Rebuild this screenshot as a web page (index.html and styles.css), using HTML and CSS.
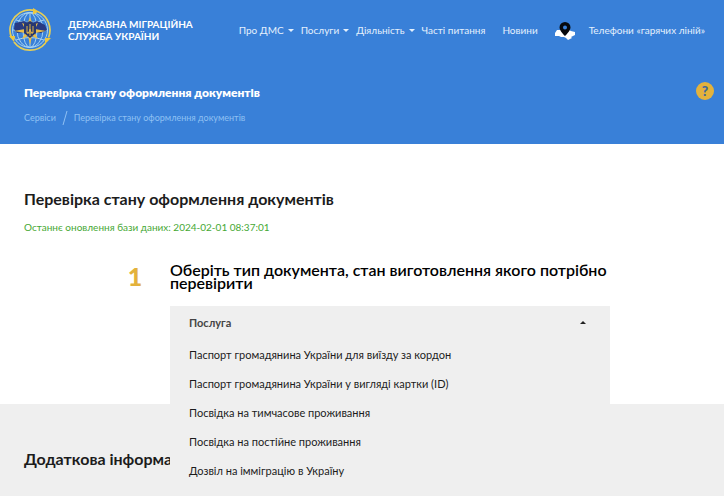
FILE: index.html
```html
<!DOCTYPE html>
<html lang="uk">
<head>
<meta charset="utf-8">
<meta name="viewport" content="width=device-width, initial-scale=1">
<title>Перевірка стану оформлення документів</title>
<link rel="stylesheet" href="styles.css">
</head>
<body>
<header class="header">
  <div class="topbar">
    <a class="brand" href="#">
      <svg class="emblem" viewBox="0 0 44 44" aria-hidden="true">
        <g fill="none" stroke="#a5d2f2" stroke-width="1">
          <circle cx="22" cy="22" r="17.5"/>
          <ellipse cx="22" cy="22" rx="7" ry="17.5"/>
          <ellipse cx="22" cy="22" rx="13" ry="17.5"/>
          <path d="M22 4v36M5 22h34M8 12q14 5 28 0M8 32q14-5 28 0"/>
        </g>
        <g fill="none" stroke="#e3cd58" stroke-width="1.8">
          <path d="M27 2.600A20 20 0 0 0 3.500 29.500M6 34a20 20 0 0 0 31.500 1M40.500 29.500A20 20 0 0 0 30 3.700"/>
        </g>
        <path fill="#ecc73f" d="M25 0l6 3.500-6 3zM1 28l6 0-1 6zM43 30l-6 0 0 6z"/>
        <path fill="#283b82" d="M7 15l9-2 6 3 7-3 8 4 2 5-6 3-6-1-5 4-5-4-8 1-3-4z"/>
        <path fill="#e8bd48" d="M22 9l3 8 5-2-3 6 11 2-11 2 3 6-6-3-2 9-2-9-6 3 3-6-11-2 11-2-3-6 5 2z"/>
        <path fill="#27376f" d="M16 16l6-3 6 3v9l-6 5-6-5z"/>
        <path fill="none" stroke="#e0b548" stroke-width="1" d="M19 18v7h6v-7M22 16v12M19 25q3 0 3-4q0 4 3 4"/>
      </svg>
      <span class="brand-name">ДЕРЖАВНА МІГРАЦІЙНА<br>СЛУЖБА УКРАЇНИ</span>
    </a>
    <nav class="nav">
      <a class="has-menu" href="#">Про ДМС</a>
      <a class="has-menu" href="#">Послуги</a>
      <a class="has-menu" href="#">Діяльність</a>
      <a class="nav-wide" href="#">Часті питання</a>
      <a class="nav-wide" href="#">Новини</a>
      <a class="nav-map" href="#" aria-label="Карта підрозділів">
        <svg class="map-icon" viewBox="0 0 20 20" aria-hidden="true">
          <path fill="#fff" d="M0 13l2-3 4 0 4 1 4-1 2 1 4 1v3l-4 2 1 1-4 2-2-2-2-1-3 0-2-1-4 0z"/>
          <path fill="#07090c" fill-rule="evenodd" d="M10 2a5.500 5.500 0 0 0-5.500 5.500C4.500 11 10 16 10 16s5.500-5 5.500-8.500A5.500 5.500 0 0 0 10 2zm0 3.500a2 2 0 1 1 0 4 2 2 0 0 1 0-4z"/>
        </svg>
      </a>
      <a href="#">Телефони «гарячих ліній»</a>
    </nav>
  </div>
  <div class="page-head">
    <div>
      <p class="page-name">Перевірка стану оформлення документів</p>
      <nav class="crumbs" aria-label="Навігація">
        <a href="#">Сервіси</a>
        <svg class="slash" viewBox="0 0 6 16" aria-hidden="true"><path d="M1 15L5 1" stroke="#8fc0f3" fill="none"/></svg>
        <span>Перевірка стану оформлення документів</span>
      </nav>
    </div>
    <button class="help" type="button" aria-label="Довідка">?</button>
  </div>
</header>
<main class="main">
  <section class="check">
    <h1>Перевірка стану оформлення документів</h1>
    <p class="updated">Останнє оновлення бази даних: 2024-02-01 08:37:01</p>
    <div class="step">
      <span class="step-number">1</span>
      <div class="step-body">
        <h2 id="step-title">Оберіть тип документа, стан виготовлення якого потрібно перевірити</h2>
        <div class="dropdown">
          <button class="toggle" type="button" aria-haspopup="listbox" aria-expanded="true" aria-controls="services">Послуга</button>
          <ul class="options" id="services" role="listbox" aria-labelledby="step-title">
            <li role="option">Паспорт громадянина України для виїзду за кордон</li>
            <li role="option">Паспорт громадянина України у вигляді картки (ID)</li>
            <li role="option">Посвідка на тимчасове проживання</li>
            <li role="option">Посвідка на постійне проживання</li>
            <li role="option">Дозвіл на імміграцію в Україну</li>
          </ul>
        </div>
      </div>
    </div>
  </section>
  <section class="extra">
    <h2>Додаткова інформація</h2>
  </section>
</main>
</body>
</html>
```
FILE: styles.css
```css
* { box-sizing: border-box; }
body {
  margin: 0;
  min-height: 100vh;
  display: flex;
  flex-direction: column;
  background: #fff;
  color: #1c1c1c;
  font-family: Lato, "Open Sans", sans-serif;
  font-size: 11px;
}
h1, h2, p, ul { margin: 0; padding: 0; }
a { color: inherit; text-decoration: none; }
button { font: inherit; color: inherit; border: 0; cursor: pointer; }

.header { background: #3980d8; color: #fff; padding-bottom: 18px; }
.topbar {
  display: flex;
  justify-content: space-between;
  align-items: center;
  height: 60px;
  padding: 0 19px 0 8px;
}
.brand { display: flex; align-items: center; gap: 16px; }
.emblem { width: 44px; height: 44px; }
.brand-name { font-weight: 700; font-size: 10px; line-height: 12px; white-space: nowrap; }
.nav {
  display: flex;
  align-items: center;
  gap: 7px;
  font-size: 10px;
  line-height: 16px;
  white-space: nowrap;
  color: #e4f0fd;
}
.has-menu { display: flex; align-items: center; gap: 4px; }
.has-menu::after {
  content: "";
  border: 3px solid transparent;
  border-top-color: #e4f0fd;
  border-bottom: 0;
}
.nav-wide { margin-right: 10px; }
.map-icon { display: block; width: 20px; height: 20px; }
.nav-map { margin-right: 7px; }

.page-head {
  display: flex;
  justify-content: space-between;
  align-items: flex-start;
  padding: 22px 10px 0 24px;
}
.page-name { font-weight: 800; font-size: 12px; line-height: 22px; }
.crumbs {
  display: flex;
  align-items: center;
  gap: 6px;
  margin-top: 6px;
  font-size: 9px;
  line-height: 14px;
  color: #8fc0f3;
}
.slash { width: 6px; height: 16px; }
.help {
  width: 18px;
  height: 18px;
  padding: 0;
  border-radius: 50%;
  background: #e3b23c;
  color: #3f6899;
  font-size: 14px;
  font-weight: 900;
  line-height: 18px;
}

.main { flex: 1; display: flex; flex-direction: column; }
.check { padding: 44px 24px 65px; }
h1 { font-size: 16px; line-height: 22px; font-weight: 700; }
.updated { margin-top: 9px; font-size: 10px; line-height: 16px; color: #46a834; }
.step {
  display: grid;
  grid-template-columns: 20px minmax(0, 440px);
  column-gap: 25px;
  margin: 28px 90px 0 101px;
}
.step-number { padding-top: 1px; color: #e3b23c; font-size: 25px; line-height: 24px; font-weight: 900; text-align: center; }
.step h2 { color: #000; font-size: 16px; line-height: 13px; font-weight: 600; }
.dropdown { position: relative; margin-top: 17px; background: #efefef; }
.toggle {
  display: flex;
  justify-content: space-between;
  align-items: center;
  width: 100%;
  height: 33px;
  padding: 0 24px 0 19px;
  background: #efefef;
  color: #444;
  font-weight: 700;
}
.toggle::after {
  content: "";
  border: 3px solid transparent;
  border-bottom-color: #222;
  border-top: 0;
}
.options {
  position: absolute;
  z-index: 1;
  top: 100%;
  left: 0;
  right: 0;
  padding: 1px 0 11px;
  background: #efefef;
  list-style: none;
}
.options li { padding: 0 19px; line-height: 29px; white-space: nowrap; cursor: pointer; }
.extra { flex: 1; padding: 44px 24px 20px; background: #efefef; }
.extra h2 { font-size: 16px; line-height: 22px; font-weight: 700; }
```
